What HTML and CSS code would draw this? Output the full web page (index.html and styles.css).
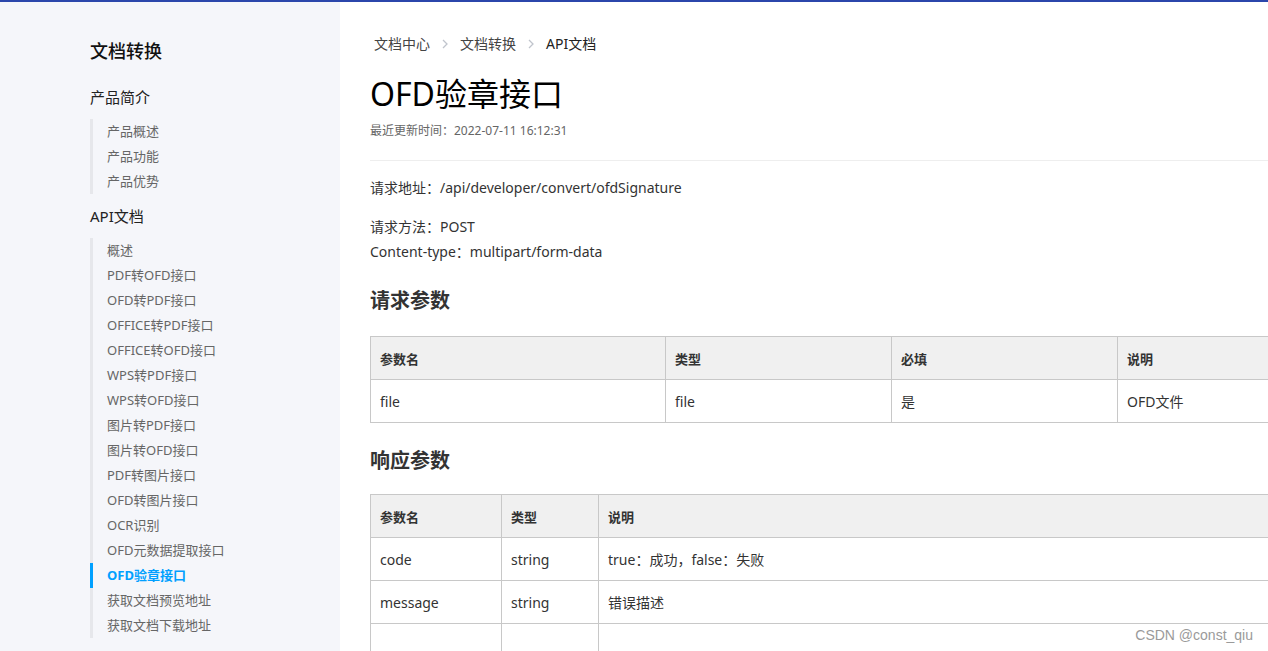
FILE: index.html
```html
<!DOCTYPE html>
<html lang="zh-CN">
<head>
<meta charset="utf-8">
<title>OFD验章接口</title>
<link rel="stylesheet" href="styles.css">
</head>
<body>
<div class="topbar"></div>
<div class="page">
  <aside class="sidebar">
    <div class="side-title">文档转换</div>
    <div class="group-title">产品简介</div>
    <ul class="sub-list">
      <li>产品概述</li>
      <li>产品功能</li>
      <li>产品优势</li>
    </ul>
    <div class="group-title">API文档</div>
    <ul class="sub-list">
      <li>概述</li>
      <li>PDF转OFD接口</li>
      <li>OFD转PDF接口</li>
      <li>OFFICE转PDF接口</li>
      <li>OFFICE转OFD接口</li>
      <li>WPS转PDF接口</li>
      <li>WPS转OFD接口</li>
      <li>图片转PDF接口</li>
      <li>图片转OFD接口</li>
      <li>PDF转图片接口</li>
      <li>OFD转图片接口</li>
      <li>OCR识别</li>
      <li>OFD元数据提取接口</li>
      <li class="active">OFD验章接口</li>
      <li>获取文档预览地址</li>
      <li>获取文档下载地址</li>
    </ul>
  </aside>
  <main class="main">
    <nav class="crumbs">
      <span>文档中心</span>
      <span class="sep"><svg width="8" height="12" viewBox="0 0 8 12"><path d="M2 2l4 4-4 4" fill="none" stroke="#c0c4cc" stroke-width="1.3"/></svg></span>
      <span>文档转换</span>
      <span class="sep"><svg width="8" height="12" viewBox="0 0 8 12"><path d="M2 2l4 4-4 4" fill="none" stroke="#c0c4cc" stroke-width="1.3"/></svg></span>
      <span class="cur">API文档</span>
    </nav>
    <h1 class="title">OFD验章接口</h1>
    <div class="date">最近更新时间：2022-07-11 16:12:31</div>
    <hr class="divider">
    <p class="para">请求地址：/api/developer/convert/ofdSignature</p>
    <p class="para para2">请求方法：POST<br>Content-type：multipart/form-data</p>
    <h3 class="sec">请求参数</h3>
    <table class="tbl tbl1">
      <thead><tr><th>参数名</th><th>类型</th><th>必填</th><th>说明</th></tr></thead>
      <tbody><tr><td>file</td><td>file</td><td>是</td><td>OFD文件</td></tr></tbody>
    </table>
    <h3 class="sec sec2">响应参数</h3>
    <table class="tbl tbl2">
      <thead><tr><th>参数名</th><th>类型</th><th>说明</th></tr></thead>
      <tbody>
        <tr><td>code</td><td>string</td><td>true：成功，false：失败</td></tr>
        <tr><td>message</td><td>string</td><td>错误描述</td></tr>
        <tr><td></td><td></td><td></td></tr>
      </tbody>
    </table>
  </main>
</div>
<div class="watermark">CSDN @const_qiu</div>
</body>
</html>
```
FILE: styles.css
```css
html, body {
  margin: 0;
  padding: 0;
  overflow: hidden;
  height: 100%;
}
body {
  font-family: "Noto Sans", "Noto Sans CJK SC", sans-serif;
  color: #333;
  background: #fff;
  position: relative;
}
.topbar {
  height: 2px;
  background: #2b46ab;
}
.page {
  display: flex;
  height: calc(100vh - 2px);
  overflow: hidden;
}
.sidebar {
  width: 340px;
  flex: none;
  background: #f5f6fa;
  padding: 37px 0 0 90px;
  box-sizing: border-box;
}
.side-title {
  font-size: 18px;
  line-height: 24px;
  font-weight: 500;
  color: #111;
  margin-bottom: 23px;
}
.group-title {
  font-size: 15px;
  line-height: 22px;
  color: #222;
  margin-bottom: 11px;
}
.sub-list {
  list-style: none;
  margin: 0 0 11px 0;
  padding: 0;
  border-left: 3px solid #e6e7eb;
}
.sub-list li {
  font-size: 13px;
  line-height: 25px;
  height: 25px;
  color: #666;
  padding-left: 14px;
}
.sub-list li.active {
  color: #00a0ff;
  font-weight: 700;
  margin-left: -3px;
  border-left: 3px solid #00a0ff;
}
.main {
  flex: 1;
  min-width: 0;
  overflow: hidden;
  padding: 31px 0 0 30px;
}
.crumbs {
  display: flex;
  align-items: center;
  gap: 11px;
  font-size: 14px;
  line-height: 22px;
  color: #444;
  padding-left: 4px;
}
.crumbs .sep {
  display: flex;
  align-items: center;
}
.crumbs .cur {
  color: #222;
}
.title {
  margin: 17px 0 0;
  font-size: 32px;
  line-height: 44px;
  font-weight: 400;
  color: #000;
}
.date {
  margin-top: 6px;
  font-size: 12px;
  line-height: 18px;
  color: #666;
}
.divider {
  margin: 20px 0 0;
  border: 0;
  border-top: 1px solid #eeeeee;
  width: 1000px;
}
.para {
  margin: 14px 0 0;
  font-size: 14px;
  line-height: 25px;
  color: #333;
}
.para2 {
  margin-top: 14px;
}
.sec {
  margin: 22px 0 0;
  font-size: 20px;
  line-height: 30px;
  font-weight: 700;
  color: #333;
}
.sec2 {
  margin-top: 23px;
}
.tbl {
  border-collapse: collapse;
  font-size: 14px;
  color: #333;
  margin-top: 20px;
  table-layout: fixed;
  width: 1000px;
}
.tbl th, .tbl td {
  border: 1px solid #c8c8c8;
  height: 43px;
  padding: 0 9px;
  text-align: left;
  box-sizing: border-box;
}
.tbl th {
  background: #f0f0f0;
  font-weight: 700;
  font-size: 13px;
}
.tbl1 th:nth-child(1) { width: 295px; }
.tbl1 th:nth-child(2) { width: 226px; }
.tbl1 th:nth-child(3) { width: 226px; }
.tbl2 th:nth-child(1) { width: 131px; }
.tbl2 th:nth-child(2) { width: 97px; }
.tbl2 {
  margin-top: 18px;
}
.watermark {
  position: absolute;
  right: 15px;
  bottom: 8px;
  font-family: "Liberation Sans", sans-serif;
  font-size: 14px;
  color: #9a9a9a;
  background: rgba(255,255,255,0.8);
}
```
